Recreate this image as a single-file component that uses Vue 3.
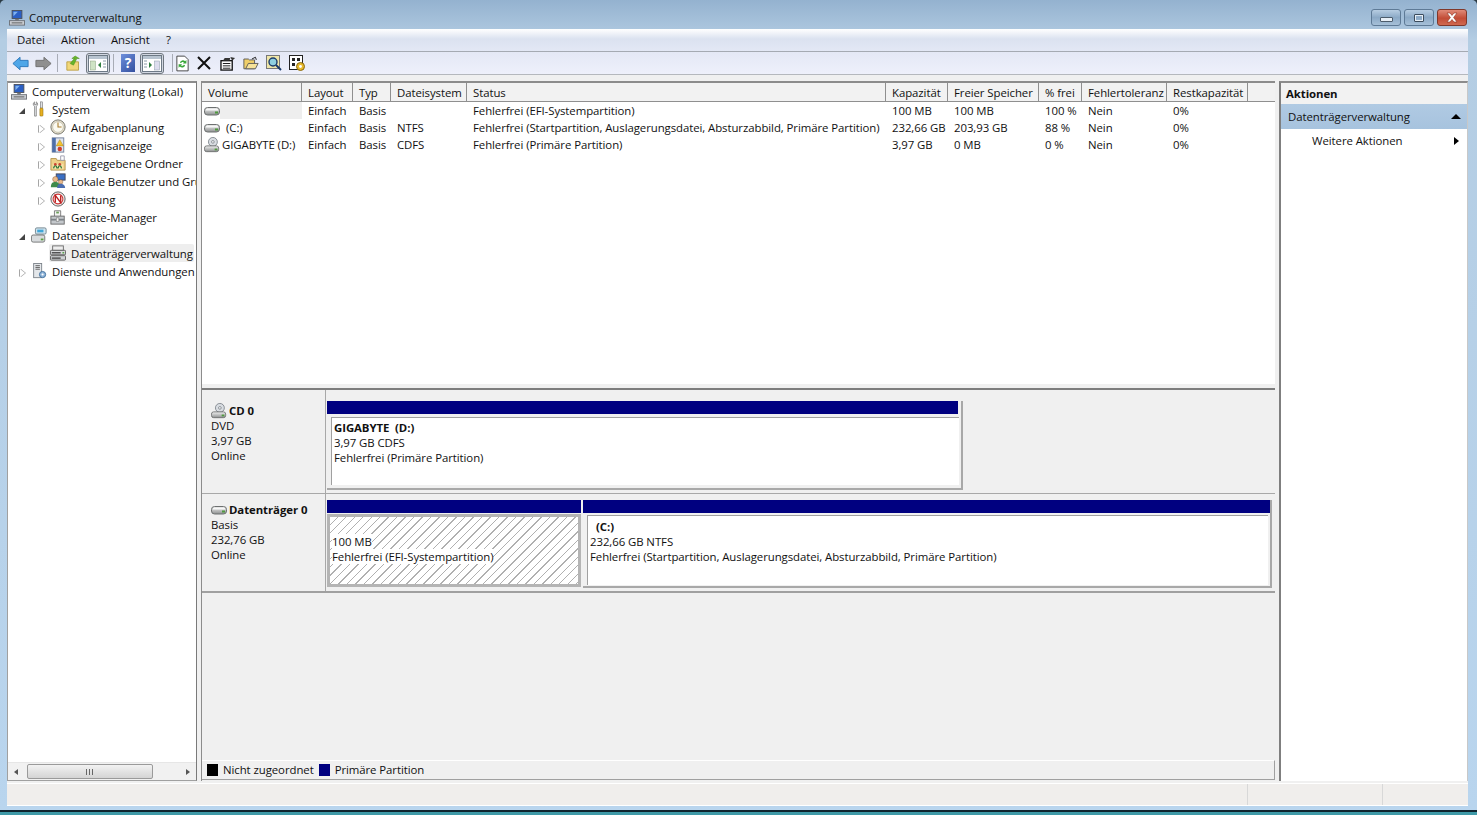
<template>
  <div class="window">
    <svg class="defs" width="0" height="0">
      <defs>
        <linearGradient id="hddG" x1="0" y1="0" x2="0" y2="1"><stop offset="0" stop-color="#f2f2f2"/><stop offset="1" stop-color="#8d9090"/></linearGradient>
        <symbol id="hdd" viewBox="0 0 16 16">
          <rect x="0.5" y="4.5" width="15" height="7.5" rx="3" fill="url(#hddG)" stroke="#6d7070"/>
          <rect x="2" y="6" width="12" height="1.5" fill="#fff" opacity=".8"/>
          <rect x="11" y="8.5" width="3" height="2" fill="#4f9a3e"/>
        </symbol>
        <symbol id="cd" viewBox="0 0 18 18">
          <circle cx="10" cy="5.5" r="5" fill="#d9dde2" stroke="#7e858c"/>
          <circle cx="10" cy="5.5" r="1.5" fill="#fff" stroke="#7e858c"/>
          <rect x="0.5" y="10" width="16" height="6.5" rx="2.5" fill="url(#hddG)" stroke="#6d7070"/>
          <rect x="12" y="13" width="3" height="2" fill="#4f9a3e"/>
        </symbol>
        <symbol id="comp" viewBox="0 0 18 18">
          <rect x="3.5" y="0.5" width="11" height="9" fill="#2b5fc4" stroke="#4a4f58"/>
          <path d="M5 2h5l-5 5z" fill="#7fb3f0"/>
          <rect x="7" y="10" width="4" height="2" fill="#777"/>
          <rect x="0.5" y="12" width="17" height="5" fill="#c9cdd2" stroke="#6a6e74"/>
          <rect x="3" y="14" width="12" height="1" fill="#555"/>
        </symbol>
      </defs>
    </svg>

    <header class="titlebar">
      <svg class="ico16 title-ico"><use href="#comp"/></svg>
      <span class="title-text">Computerverwaltung</span>
      <div class="wbtns">
        <div class="wbtn"><i class="min-g"></i></div>
        <div class="wbtn"><i class="max-g"></i></div>
        <div class="wbtn close">
          <svg width="14" height="11" viewBox="0 0 14 11"><path d="M2 1h3l2 2.400L9 1h3L8.600 5.500 12 10H9L7 7.500 5 10H2l3.400-4.500z" fill="#fff" stroke="#8a3020" stroke-width=".6"/></svg>
        </div>
      </div>
    </header>

    <div class="client">
      <nav class="menubar">
        <span v-for="m in menus" :key="m">{{ m }}</span>
      </nav>

      <div class="toolbar">
        <svg class="tb ml5" width="17" height="15" viewBox="0 0 19 16"><path d="M1 8l8-7v3.500h9v7H9V15z" fill="#4ea6e8" stroke="#2a75b8"/></svg>
        <svg class="tb ml6" width="17" height="15" viewBox="0 0 19 16"><path d="M18 8l-8-7v3.500H1v7h9V15z" fill="#8f8f8f" stroke="#6f6f6f"/></svg>
        <i class="tsep ml5"></i>
        <svg class="tb ml8" width="15" height="17" viewBox="0 0 18 18"><path d="M1 7h14v10H1z" fill="#f2d77a" stroke="#b89a3c"/><path d="M5 9l5-6H7l4-3 5 3h-3l-4 8z" fill="#67b52a" stroke="#4a8a1a" stroke-width=".6"/></svg>
        <div class="tbtn ml5">
          <svg width="20" height="17" viewBox="0 0 20 17"><rect x=".5" y=".5" width="19" height="16" fill="#fff" stroke="#6e7a86"/><rect x="1" y="1" width="18" height="3" fill="#b8c4d0"/><rect x="2.500" y="6" width="5" height="9" fill="#cfe3c5" stroke="#8aa080" stroke-width=".5"/><path d="M13 7v6l-3-3z" fill="#2f7f3f"/><path d="M15 6h3M15 9h3M15 12h3" stroke="#8a9aa8"/></svg>
        </div>
        <i class="tsep ml3"></i>
        <div class="help ml7">?</div>
        <div class="tbtn ml5">
          <svg width="20" height="17" viewBox="0 0 20 17"><rect x=".5" y=".5" width="19" height="16" fill="#fff" stroke="#6e7a86"/><rect x="1" y="1" width="18" height="3" fill="#b8c4d0"/><rect x="12.500" y="6" width="5" height="9" fill="#dde" stroke="#8a9aa8" stroke-width=".5"/><path d="M7 7v6l3-3z" fill="#2f7f3f"/><path d="M2 6h3M2 9h3M2 12h3" stroke="#8a9aa8"/></svg>
        </div>
        <i class="tsep ml8"></i>
        <svg class="tb ml3" width="13" height="17" viewBox="0 0 15 18"><path d="M1 .5h9l4 4v13H1z" fill="#fff" stroke="#333"/><path d="M4.500 8a3.500 3.500 0 0 1 6-1.500L12 5v4H8l1.200-1.200A2 2 0 0 0 6 8.500z" fill="#3aa83a"/><path d="M10.500 11a3.500 3.500 0 0 1-6 1.500L3 14v-4h4l-1.200 1.200A2 2 0 0 0 9 10.500z" fill="#3aa83a"/></svg>
        <svg class="tb ml8" width="14" height="14" viewBox="0 0 14 14"><path d="M1 1l12 12M13 1L1 13" stroke="#111" stroke-width="2"/></svg>
        <svg class="tb ml9" width="16" height="15" viewBox="0 0 17 16"><rect x="1" y="5" width="12" height="10" fill="#fff" stroke="#111" stroke-width="1.400"/><path d="M3 8h8M3 10.500h8M3 13h8" stroke="#111"/><path d="M3 5l2-3h6l-1 3zM11 1l5 1-3 3z" fill="#333"/></svg>
        <svg class="tb ml7" width="16" height="14" viewBox="0 0 18 15"><path d="M1 3h5l1 1h6v10H1z" fill="#f0cf68" stroke="#555"/><path d="M3 14l3-6h11l-3 6z" fill="#f7e39a" stroke="#555"/><path d="M10 3l4-2 1 3" fill="none" stroke="#111"/></svg>
        <svg class="tb ml7" width="16" height="16" viewBox="0 0 16 16"><rect x=".5" y=".5" width="13" height="13" fill="#efe6a8" stroke="#777"/><circle cx="7" cy="7" r="4" fill="#8fd0e0" stroke="#1c3c6a" stroke-width="1.400"/><path d="M10 10l5 5" stroke="#1c3c6a" stroke-width="2"/></svg>
        <svg class="tb ml7" width="17" height="17" viewBox="0 0 17 17"><rect x=".5" y=".5" width="13" height="14" fill="#fff" stroke="#222"/><path d="M3 3h3v3H3zM8 3h3v3H8zM3 8h3v3H3z" fill="#222"/><circle cx="11.500" cy="11.500" r="4" fill="#e7b92c" stroke="#8a6a10"/><circle cx="11.500" cy="11.500" r="1.400" fill="#fff"/></svg>
      </div>

      <main class="panes">
        <aside class="tree-pane">
          <div class="tree">
            <div
              v-for="n in tree"
              :key="n.label"
              class="node"
              :class="[`lv${n.level}`, { first: n.first }]"
            >
              <span class="exp" :class="n.exp"></span>
              <span class="label-wrap" :class="{ sel: n.sel }">
                <svg class="ico16" viewBox="0 0 18 18" v-html="n.icon"></svg>
                <span class="lbl">{{ n.label }}</span>
              </span>
            </div>
          </div>
          <div class="hscroll">
            <span class="arrow-l"></span>
            <div class="thumb"><i></i><i></i><i></i></div>
            <span class="arrow-r"></span>
          </div>
        </aside>

        <section class="center">
          <div class="list">
            <div class="lhead">
              <div v-for="c in cols" :key="c.t" class="hcell" :style="{ width: c.w + 'px' }">{{ c.t }}</div>
              <div class="hfill"></div>
            </div>
            <div v-for="(r, i) in rows" :key="i" class="lrow">
              <div class="cell vol" :style="{ width: cols[0].w + 'px' }">
                <svg class="rowico" :class="{ cdi: r.cd }"><use :href="r.cd ? '#cd' : '#hdd'"/></svg>
                <span class="vname" :class="{ empty: !r.name, shift: r.name === '(C:)' }">{{ r.name }}</span>
              </div>
              <div v-for="(v, j) in r.vals" :key="j" class="cell" :style="{ width: cols[j + 1].w + 'px' }">{{ v }}</div>
            </div>
          </div>

          <div class="splitter"></div>

          <div class="disks">
            <div class="disk cd-disk">
              <div class="dinfo">
                <div class="dname"><svg class="dico cdico"><use href="#cd"/></svg><b>CD 0</b></div>
                <div>DVD</div>
                <div>3,97 GB</div>
                <div>Online</div>
              </div>
              <div class="parts">
                <div class="part cdpart">
                  <div class="bar"></div>
                  <div class="pbody">
                    <b>GIGABYTE &nbsp;(D:)</b>
                    <div>3,97 GB CDFS</div>
                    <div>Fehlerfrei (Primäre Partition)</div>
                  </div>
                </div>
              </div>
            </div>
            <div class="disk hd-disk">
              <div class="dinfo">
                <div class="dname"><svg class="dico"><use href="#hdd"/></svg><b>Datenträger 0</b></div>
                <div>Basis</div>
                <div>232,76 GB</div>
                <div>Online</div>
              </div>
              <div class="parts">
                <div class="part efi">
                  <div class="bar"></div>
                  <div class="pbody hatch">
                    <div><span class="opaque">100 MB</span></div>
                    <div><span class="opaque">Fehlerfrei (EFI-Systempartition)</span></div>
                  </div>
                </div>
                <div class="part sys">
                  <div class="bar"></div>
                  <div class="pbody">
                    <b class="cname">(C:)</b>
                    <div>232,66 GB NTFS</div>
                    <div>Fehlerfrei (Startpartition, Auslagerungsdatei, Absturzabbild, Primäre Partition)</div>
                  </div>
                </div>
              </div>
            </div>
          </div>

          <div class="legend">
            <i class="sw black"></i><span>Nicht zugeordnet</span>
            <i class="sw blue"></i><span>Primäre Partition</span>
          </div>
        </section>

        <aside class="actions">
          <div class="ahead">Aktionen</div>
          <div class="asec"><span>Datenträgerverwaltung</span><i class="up"></i></div>
          <div class="aitem"><span>Weitere Aktionen</span><i class="right"></i></div>
        </aside>
      </main>

      <footer class="status">
        <div class="s1"></div>
        <div class="s2"></div>
        <div class="s3"></div>
      </footer>
    </div>
    <div class="frame-foot"></div>
  </div>
</template>

<script setup>
const menus = ['Datei', 'Aktion', 'Ansicht', '?']

const comp = '<rect x="3.5" y="0.5" width="11" height="9" fill="#2b5fc4" stroke="#4a4f58"/><path d="M5 2h5l-5 5z" fill="#7fb3f0"/><rect x="7" y="10" width="4" height="2" fill="#777"/><rect x="0.5" y="12" width="17" height="5" fill="#c9cdd2" stroke="#6a6e74"/><rect x="3" y="14" width="12" height="1" fill="#555"/>'
const tools = '<path d="M4 1c-2 1-2 4 0 5v11h2V6c2-1 2-4 0-5v3H4z" fill="#e4e6e8" stroke="#666" stroke-width=".7"/><rect x="10.500" y="1" width="2.500" height="7" fill="#dfe1e4" stroke="#666" stroke-width=".6"/><rect x="10" y="8" width="3.500" height="9" rx="1" fill="#e8b020" stroke="#8a6a10" stroke-width=".6"/>'
const clock = '<circle cx="9" cy="9" r="8" fill="#e8e2d0" stroke="#6b6b60"/><circle cx="9" cy="9" r="6" fill="#fbfaf0" stroke="#a8a590" stroke-width=".6"/><path d="M9 4v5h4" fill="none" stroke="#a87a2a" stroke-width="1.200"/>'
const evt = '<rect x="2.500" y="1" width="13" height="16" fill="#dfe5f0" stroke="#6d7c96"/><rect x="2.500" y="1" width="4" height="16" fill="#4f6fa8"/><path d="M11 3l4 7H7z" fill="#f2c230" stroke="#a07a10" stroke-width=".5"/><circle cx="11" cy="13.500" r="2.500" fill="#cf3c2c"/>'
const share = '<path d="M1 4h6l1 2h9v11H1z" fill="#eed088" stroke="#b3934a"/><path d="M12 1h4v5h-4z" fill="#fff" stroke="#99a"/><path d="M3 10h12v6H3z" fill="#f7e2a8"/><path d="M4 15c1-4 3-4 4 0M9 15c1-4 3-4 4 0" stroke="#2b7a3a" stroke-width="1.500" fill="none"/><circle cx="6" cy="10.500" r="1.500" fill="#c43"/><circle cx="11" cy="10.500" r="1.500" fill="#c43"/>'
const users = '<rect x="7" y="1" width="10" height="7" fill="#3a6fc4" stroke="#445"/><circle cx="6" cy="7" r="3" fill="#e9b98a" stroke="#7a5230" stroke-width=".5"/><path d="M1 16c0-5 2-6 5-6s5 1 5 6z" fill="#3f8a4a"/><circle cx="12" cy="10" r="2.500" fill="#e9b98a" stroke="#7a5230" stroke-width=".5"/><path d="M8 17c0-4 2-5 4-5s5 1 5 5z" fill="#4a6db0"/>'
const perf = '<circle cx="9" cy="9" r="8" fill="#ececec" stroke="#555"/><circle cx="9" cy="9" r="5.500" fill="#fff" stroke="#c33" stroke-width="1.200"/><path d="M6 13V5l6 8V5" fill="none" stroke="#b22" stroke-width="1.600"/>'
const dev = '<path d="M5 8V2h7v6" fill="#f3f3f3" stroke="#777"/><rect x="7" y="3" width="3" height="2" fill="#6a9e5a"/><rect x="1" y="8" width="15" height="9" fill="#c4c8cc" stroke="#666"/><rect x="1" y="11" width="15" height="2" fill="#7c8288"/><rect x="7" y="10" width="3" height="4" fill="#eee" stroke="#666" stroke-width=".5"/>'
const store = '<rect x="5" y="1" width="12" height="7" rx="1.500" fill="#cfe3ee" stroke="#6a7f8a"/><rect x="7" y="3" width="7" height="3" fill="#3fa6d8"/><rect x="0.500" y="9" width="15" height="8" rx="2" fill="#d8dbdd" stroke="#6d7070"/><rect x="11" y="13" width="3" height="2" fill="#5aa040"/>'
const mgr = '<rect x="3" y="1" width="12" height="5" fill="#eee" stroke="#666"/><rect x=".5" y="6" width="17" height="5" rx="1" fill="#d8dadc" stroke="#555"/><rect x="2" y="8" width="10" height="1.500" fill="#444"/><rect x="14" y="8" width="2" height="1.500" fill="#4a9a3a"/><rect x=".5" y="12" width="17" height="5" rx="1" fill="#cfd2d4" stroke="#555"/><rect x="2" y="14" width="10" height="1.500" fill="#444"/>'
const svc = '<rect x="3" y=".5" width="9" height="16" fill="#e4e7ea" stroke="#7a8088"/><path d="M5 3h5M5 5h5M5 7h5" stroke="#555"/><circle cx="13" cy="13" r="3.500" fill="#8fb4d8" stroke="#3a6a9a"/><circle cx="13" cy="13" r="1.200" fill="#fff"/>'

const tree = [
  { label: 'Computerverwaltung (Lokal)', level: 0, exp: '', icon: comp, first: true },
  { label: 'System', level: 1, exp: 'open', icon: tools },
  { label: 'Aufgabenplanung', level: 2, exp: 'closed', icon: clock },
  { label: 'Ereignisanzeige', level: 2, exp: 'closed', icon: evt },
  { label: 'Freigegebene Ordner', level: 2, exp: 'closed', icon: share },
  { label: 'Lokale Benutzer und Gruppen', level: 2, exp: 'closed', icon: users },
  { label: 'Leistung', level: 2, exp: 'closed', icon: perf },
  { label: 'Geräte-Manager', level: 2, exp: '', icon: dev },
  { label: 'Datenspeicher', level: 1, exp: 'open', icon: store },
  { label: 'Datenträgerverwaltung', level: 2, exp: '', icon: mgr, sel: true },
  { label: 'Dienste und Anwendungen', level: 1, exp: 'closed', icon: svc }
]

const cols = [
  { t: 'Volume', w: 100 },
  { t: 'Layout', w: 51 },
  { t: 'Typ', w: 38 },
  { t: 'Dateisystem', w: 76 },
  { t: 'Status', w: 419 },
  { t: 'Kapazität', w: 62 },
  { t: 'Freier Speicher', w: 91 },
  { t: '% frei', w: 43 },
  { t: 'Fehlertoleranz', w: 85 },
  { t: 'Restkapazität', w: 81 }
]

const rows = [
  { name: '', vals: ['Einfach', 'Basis', '', 'Fehlerfrei (EFI-Systempartition)', '100 MB', '100 MB', '100 %', 'Nein', '0%'] },
  { name: '(C:)', vals: ['Einfach', 'Basis', 'NTFS', 'Fehlerfrei (Startpartition, Auslagerungsdatei, Absturzabbild, Primäre Partition)', '232,66 GB', '203,93 GB', '88 %', 'Nein', '0%'] },
  { name: 'GIGABYTE (D:)', cd: true, vals: ['Einfach', 'Basis', 'CDFS', 'Fehlerfrei (Primäre Partition)', '3,97 GB', '0 MB', '0 %', 'Nein', '0%'] }
]
</script>

<style>
html, body { margin: 0; overflow: hidden; background: #2a3a44; }
</style>

<style scoped>
.window {
  width: 1477px;
  height: 815px;
  display: flex;
  flex-direction: column;
  overflow: hidden;
  box-sizing: border-box;
  font-family: "Open Sans", "Noto Sans", sans-serif;
  font-size: 11.400px;
  letter-spacing: -0.07px;
  color: #111;
  background: linear-gradient(#94b2cf 0, #b4cde3 40px, #b9d5ee 100%);
  border-radius: 5px 5px 0 0;
  position: relative;
}
.defs { position: absolute; }
.ico16 { width: 16px; height: 16px; flex: none; }
.ml3 { margin-left: 3px; }
.ml5 { margin-left: 5px; }
.ml6 { margin-left: 6px; }
.ml7 { margin-left: 7px; }
.ml8 { margin-left: 8px; }
.ml9 { margin-left: 9px; }

.titlebar {
  height: 29px;
  flex: none;
  display: flex;
  align-items: center;
  padding: 6px 10px 0 9px;
  box-sizing: border-box;
}
.title-ico { margin-right: 4px; }
.title-text { font-size: 11.400px; letter-spacing: 0; color: #111; }
.wbtns { margin-left: auto; display: flex; gap: 3px; align-self: flex-start; margin-top: 3px; }
.wbtn {
  width: 28px;
  height: 15px;
  border: 1px solid #5e7a96;
  border-radius: 3px;
  display: flex;
  align-items: center;
  justify-content: center;
  background: linear-gradient(#b7cde2, #8ba9c6 50%, #a6c0d8);
}
.wbtn.close { background: linear-gradient(#e08a78, #c24c36 55%, #d06a50); border-color: #80382a; }
.min-g { width: 11px; height: 3px; margin-top: 4px; background: #e6eef6; border: 1px solid #4c5c6c; border-radius: 1px; }
.max-g { width: 8px; height: 6px; border: 1px solid #3c4c5c; outline: 1px solid #e6eef6; outline-offset: -2px; border-radius: 1px; }

.client {
  flex: 1;
  min-height: 0;
  margin: 0 9px 4px 7px;
  display: flex;
  flex-direction: column;
  background: #f0f0f0;
}
.menubar {
  height: 23px;
  flex: none;
  display: flex;
  align-items: center;
  gap: 16px;
  padding: 0 0 2px 10px;
  box-sizing: border-box;
  letter-spacing: 0;
  background: linear-gradient(#fff 0, #dbe2f0 45%, #e3e8f5 100%);
  border-bottom: 1px solid #a5aab2;
}
.toolbar {
  height: 23px;
  flex: none;
  display: flex;
  align-items: center;
  box-sizing: border-box;
  background: linear-gradient(#e4e8f5, #eef0fb);
  border-bottom: 1px solid #b5b8bd;
}
.tb { flex: none; }
.tsep { width: 1px; height: 18px; background: #a8acb6; flex: none; }
.tbtn {
  width: 24px;
  height: 21px;
  box-sizing: border-box;
  border: 1px solid #6f7780;
  border-radius: 3px;
  background: #d3d8e2;
  display: flex;
  align-items: center;
  justify-content: center;
  flex: none;
}
.help {
  width: 14px;
  height: 18px;
  flex: none;
  background: linear-gradient(135deg, #6d8fdc, #34509f);
  color: #fff;
  font-size: 14px;
  font-weight: 700;
  line-height: 18px;
  text-align: center;
}

.panes {
  flex: 1;
  min-height: 0;
  display: flex;
  padding-top: 6px;
  gap: 4px;
}
.tree-pane {
  width: 190px;
  flex: none;
  display: flex;
  flex-direction: column;
  background: #fff;
  border: 1px solid #a0a0a0;
  border-top: 2px solid #8c8c8c;
  border-right-color: #7a7a7a;
  box-sizing: border-box;
  overflow: hidden;
}
.tree { flex: 1; min-height: 0; }
.node { height: 18px; display: flex; align-items: center; white-space: nowrap; }
.node.first { height: 17px; letter-spacing: 0.03px; }
.lv0 { padding-left: 2px; }
.lv1 { padding-left: 9px; }
.lv2 { padding-left: 28px; }
.exp { width: 11px; height: 11px; flex: none; position: relative; margin-right: 3px; }
.lv0 .exp { width: 0; margin-right: 1px; }
.exp.open::after {
  content: "";
  position: absolute;
  left: 2px; top: 4px;
  border-style: solid;
  border-width: 0 0 6px 6px;
  border-color: transparent transparent #444 transparent;
}
.exp.closed::after {
  content: "";
  position: absolute;
  left: 3px; top: 3px;
  border-style: solid;
  border-width: 4.500px 0 4.500px 5px;
  border-color: transparent transparent transparent #fff;
  filter: drop-shadow(-1px 0 0 #a6a6a6) drop-shadow(1px 0 0 #a6a6a6);
}
.label-wrap { display: flex; align-items: center; gap: 5px; height: 18px; flex: none; }
.label-wrap.sel { background: #eeeeee; border-radius: 2px; padding: 0 1px; margin-left: -1px; }

.hscroll {
  height: 17px;
  flex: none;
  display: flex;
  align-items: center;
  background: #f1f1f1;
  border-top: 1px solid #e6e6e6;
  padding: 0 6px;
  justify-content: space-between;
}
.arrow-l { border-style: solid; border-width: 3.500px 4px 3.500px 0; border-color: transparent #555 transparent transparent; }
.arrow-r { border-style: solid; border-width: 3.500px 0 3.500px 4px; border-color: transparent transparent transparent #555; }
.thumb {
  width: 126px;
  height: 15px;
  margin-left: 1px;
  margin-right: 26px;
  border: 1px solid #9a9a9a;
  border-radius: 2px;
  background: linear-gradient(#f2f2f2, #d4d4d4);
  display: flex;
  align-items: center;
  justify-content: center;
  gap: 1px;
  box-sizing: border-box;
  flex: none;
}
.thumb i { width: 1px; height: 6px; background: #666; margin-right: 1px; }

.center {
  width: 1074px;
  flex: none;
  display: flex;
  flex-direction: column;
  border-left: 1px solid #8c8c8c;
  border-top: 2px solid #8c8c8c;
  background: #f0f0f0;
  box-sizing: border-box;
}
.list { height: 301px; flex: none; background: #fff; overflow: hidden; }
.lhead { display: flex; height: 18px; background: #f2f2f2; border-bottom: 1px solid #8f8f8f; }
.hcell {
  flex: none;
  box-sizing: border-box;
  padding: 1px 0 0 6px;
  border-right: 1px solid #8f8f8f;
  line-height: 17px;
  white-space: nowrap;
  overflow: hidden;
}
.hfill { flex: 1; }
.lrow { display: flex; height: 17px; line-height: 17px; }
.cell { flex: none; box-sizing: border-box; padding-left: 6px; white-space: nowrap; overflow: hidden; }
.cell.vol { padding-left: 2px; display: flex; align-items: center; }
.rowico { width: 16px; height: 16px; flex: none; }
.vname { flex: 1; padding-left: 2px; }
.vname.empty { height: 17px; background: #eeeeee; }
.vname.shift { padding-left: 6px; }

.splitter { height: 6px; flex: none; background: #f0f0f0; border-bottom: 2px solid #7d7d7d; box-sizing: border-box; }
.disks { flex: 1; min-height: 0; }
.disk { display: flex; box-sizing: border-box; }
.cd-disk { height: 103px; }
.hd-disk { height: 100px; border-top: 1px solid #a8a8a8; border-bottom: 2px solid #a0a0a0; }
.dinfo {
  width: 124px;
  flex: none;
  box-sizing: border-box;
  padding-left: 9px;
  border-right: 1px solid #a8a8a8;
  line-height: 15px;
}
.cd-disk .dinfo { padding-top: 13px; }
.hd-disk .dinfo { padding-top: 8px; }
.dname { display: flex; align-items: center; height: 15px; }
.dname b { margin-left: 2px; }
.dico { width: 16px; height: 16px; flex: none; }
.cdico { width: 16px; height: 16px; }
.parts { display: flex; flex: 1; padding-left: 1px; padding-right: 3px; gap: 2px; align-items: flex-start; }
.cd-disk .parts { padding-top: 11px; }
.hd-disk .parts { padding-top: 6px; }
.part { box-sizing: border-box; }
.cdpart { width: 636px; height: 89px; background: #f0f0f0; border-right: 2px solid #a8a8a8; border-bottom: 2px solid #a8a8a8; }
.efi { width: 254px; height: 88px; }
.sys { flex: 1; height: 88px; border-right: 2px solid #a8a8a8; border-bottom: 2px solid #a8a8a8; }
.bar { height: 13px; background: #000080; }
.cdpart .bar { width: 631px; }
.pbody {
  box-sizing: border-box;
  background: #fff;
  border-top: 1px solid #a0a0a0;
  border-left: 1px solid #a0a0a0;
  line-height: 15px;
  margin-left: 4px;
  padding: 3px 0 0 2px;
}
.cdpart .pbody { width: 628px; height: 68px; margin-top: 3px; padding-top: 2px; }
.sys .pbody { height: 70px; margin-top: 2px; margin-right: 2px; }
.efi .pbody {
  margin: 1px 0 0 0;
  height: 73px;
  border: 3px solid #b4b4b4;
  padding: 17px 0 0 2px;
  background: repeating-linear-gradient(135deg, #fff 0, #fff 5px, #b0b0b0 5px, #b0b0b0 6px);
}
.opaque { background: #fff; }
.cname { display: block; padding-left: 6px; }

.legend {
  height: 20px;
  margin-bottom: 1px;
  flex: none;
  box-sizing: border-box;
  display: flex;
  align-items: center;
  padding: 0 0 1px 5px;
  border-top: 1px solid #fff;
  border-right: 1px solid #a0a0a0;
  border-bottom: 1px solid #a0a0a0;
}
.sw { width: 11px; height: 12px; flex: none; margin-right: 5px; }
.sw.black { background: #000; }
.sw.blue { background: #000080; margin-left: 5px; }

.actions {
  width: 189px;
  flex: none;
  box-sizing: border-box;
  background: #fff;
  border-left: 2px solid #7f7f7f;
  border-top: 2px solid #8c8c8c;
  border-right: 1px solid #c8c8c8;
}
.ahead { height: 21px; line-height: 21px; padding-left: 5px; font-weight: 700; background: #f2f2f2; }
.asec {
  height: 25px;
  display: flex;
  align-items: center;
  justify-content: space-between;
  padding: 0 6px 0 7px;
  background: linear-gradient(#b0cae3, #a7c3de);
}
.up { border-style: solid; border-width: 0 5px 5px 5px; border-color: transparent transparent #000 transparent; }
.aitem {
  height: 23px;
  display: flex;
  align-items: center;
  justify-content: space-between;
  padding: 0 8px 0 31px;
}
.right { border-style: solid; border-width: 4.500px 0 4.500px 5px; border-color: transparent transparent transparent #000; }

.status {
  height: 23px;
  margin-top: 2px;
  flex: none;
  display: flex;
  box-sizing: border-box;
  background: #f0eeec;
  border-top: 1px solid #fff;
  border-bottom: 1px solid #fff;
}
.s1 { flex: 1; border-right: 1px solid #d8d8d8; }
.s2 { width: 134px; border-right: 1px solid #d8d8d8; }
.s3 { width: 85px; }

.frame-foot {
  height: 5px;
  flex: none;
  box-sizing: border-box;
  border-top: 2px solid #10242f;
  background: #3f9aa8;
}
</style>
